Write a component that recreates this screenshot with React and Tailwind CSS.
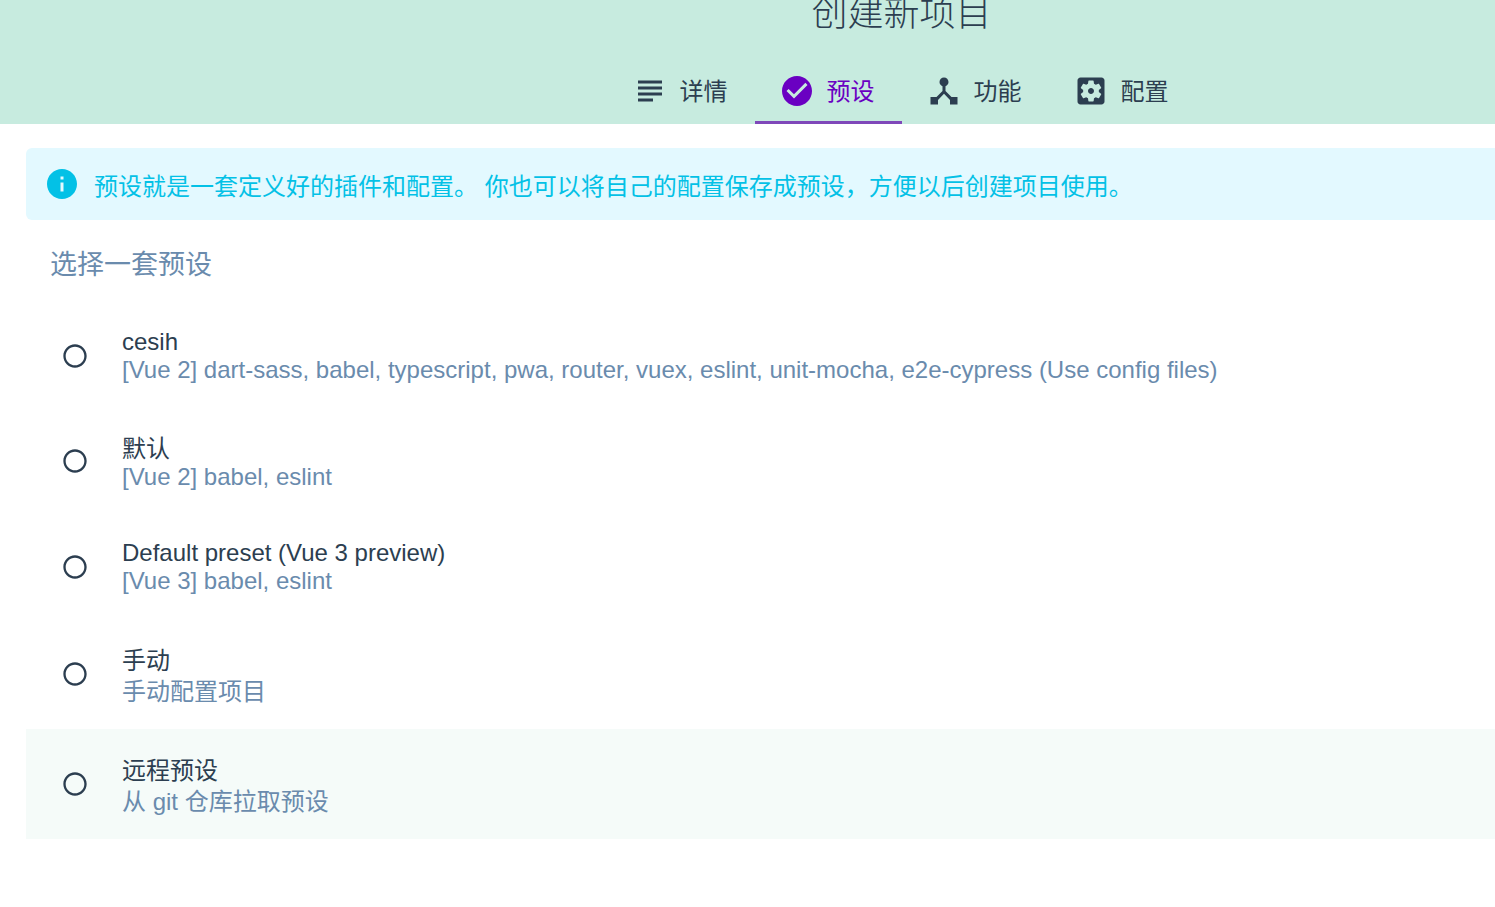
const SANS = 'font-["Liberation_Sans","Noto_Sans_CJK_SC",sans-serif]';

const ICONS = {
  subject: 'M14 17H4v2h10v-2zm6-8H4v2h16V9zM4 15h16v-2H4v2zM4 5v2h16V5H4z',
  check: 'M12 2C6.48 2 2 6.48 2 12s4.48 10 10 10 10-4.48 10-10S17.52 2 12 2zm-2 15l-5-5 1.41-1.41L10 14.17l7.59-7.59L19 8l-9 9z',
  hub: 'M17 16l-4-4V8.82C14.16 8.4 15 7.3 15 6c0-1.66-1.34-3-3-3S9 4.34 9 6c0 1.3.84 2.4 2 2.82V12l-4 4H3v5h5v-3.05l4-4.2 4 4.2V21h5v-5h-4z',
  settings: 'M12 10c-1.1 0-2 .9-2 2s.9 2 2 2 2-.9 2-2-.9-2-2-2zm7-7H5c-1.11 0-2 .9-2 2v14c0 1.1.89 2 2 2h14c1.11 0 2-.9 2-2V5c0-1.1-.89-2-2-2zm-1.75 9c0 .23-.02.46-.05.68l1.48 1.16c.13.11.17.3.08.45l-1.4 2.42c-.09.15-.27.21-.43.15l-1.74-.7c-.36.28-.76.51-1.18.69l-.26 1.85c-.03.17-.18.3-.35.3h-2.8c-.17 0-.32-.13-.35-.29l-.26-1.85c-.43-.18-.82-.41-1.18-.69l-1.74.7c-.16.06-.34 0-.43-.15l-1.4-2.42c-.09-.15-.05-.34.08-.45l1.48-1.16c-.03-.23-.05-.46-.05-.69 0-.23.02-.46.05-.68l-1.48-1.16c-.13-.11-.17-.3-.08-.45l1.4-2.42c.09-.15.27-.21.43-.15l1.74.7c.36-.28.76-.51 1.18-.69l.26-1.85c.03-.17.18-.3.35-.3h2.8c.17 0 .32.13.35.29l.26 1.85c.43.18.82.41 1.18.69l1.74-.7c.16-.06.34 0 .43.15l1.4 2.42c.09.15.05.34-.08.45l-1.48 1.16c.03.23.05.46.05.69z',
  info: 'M12 2C6.48 2 2 6.48 2 12s4.48 10 10 10 10-4.48 10-10S17.52 2 12 2zm1 15h-2v-6h2v6zm0-8h-2V7h2v2z',
  radio: 'M12 2C6.48 2 2 6.48 2 12s4.48 10 10 10 10-4.48 10-10S17.52 2 12 2zm0 18c-4.42 0-8-3.58-8-8s3.58-8 8-8 8 3.58 8 8-3.58 8-8 8z',
};

function Icon({ name, className }) {
  return (
    <svg viewBox="0 0 24 24" fill="currentColor" className={className}>
      <path d={ICONS[name]} />
    </svg>
  );
}

const tabs = [
  { label: '详情', icon: 'subject' },
  { label: '预设', icon: 'check', active: true },
  { label: '功能', icon: 'hub' },
  { label: '配置', icon: 'settings' },
];

const presets = [
  { name: 'cesih', desc: '[Vue 2] dart-sass, babel, typescript, pwa, router, vuex, eslint, unit-mocha, e2e-cypress (Use config files)', row: 'h-[105px]', text: 'leading-[28px]' },
  { name: '默认', desc: '[Vue 2] babel, eslint', row: 'h-[106px]', text: 'pt-1 leading-[28px]' },
  { name: 'Default preset (Vue 3 preview)', desc: '[Vue 3] babel, eslint', row: 'h-[105px]', text: 'leading-[28px]' },
  { name: '手动', desc: '手动配置项目', row: 'h-[110px]', text: 'pt-1 leading-[31px]' },
  { name: '远程预设', desc: '从 git 仓库拉取预设', row: 'h-[110px] bg-[#f5fbf9]', text: 'pt-1 leading-[31px]' },
];

export default function App() {
  return (
    <div className={`h-[907px] w-[1495px] overflow-hidden bg-white ${SANS}`}>
      <div className="w-[1803px]">
        {/* Header */}
        <div className="flex h-[124px] flex-col items-center overflow-hidden bg-[#c7ebdf] text-[#2c3e50]">
          <div className="mt-[-10px] text-[36px] font-light leading-[48px]">创建新项目</div>
          <div className="mt-auto flex">
            {tabs.map(tab => (
              <div
                key={tab.label}
                className={`flex h-[66px] items-center gap-3 border-b-[3px] pl-6 pr-[27px] pt-[2px] text-[24px] ${
                  tab.active ? 'border-[#7f48b9] text-[#6a00c2]' : 'border-transparent'
                }`}
              >
                <Icon name={tab.icon} className="h-9 w-9" />
                <span className="pt-[2px]">{tab.label}</span>
              </div>
            ))}
          </div>
        </div>

        {/* Content */}
        <div className="pl-[26px] pt-6">
          <div className="flex h-[72px] items-center gap-[14px] rounded-md bg-[#e3f9ff] pl-[18px] text-[24px] text-[#03c1e6]">
            <Icon name="info" className="h-9 w-9" />
            <span className="pt-[5px]">预设就是一套定义好的插件和配置。 你也可以将自己的配置保存成预设，方便以后创建项目使用。</span>
          </div>

          <div className="flex h-[83px] items-center pl-[24px] pt-2 text-[27px] leading-none text-[#6a8bad]">选择一套预设</div>

          <div>
            {presets.map(p => (
              <div key={p.name} className={`flex items-center pl-[34.5px] text-[24px] ${p.row}`}>
                <Icon name="radio" className="h-7 w-7 text-[#2c3e50]" />
                <div className={`ml-[33.5px] ${p.text}`}>
                  <div className="text-[#2c3e50]">{p.name}</div>
                  <div className="text-[#6a8bad]">{p.desc}</div>
                </div>
              </div>
            ))}
          </div>
        </div>
      </div>
    </div>
  );
}
